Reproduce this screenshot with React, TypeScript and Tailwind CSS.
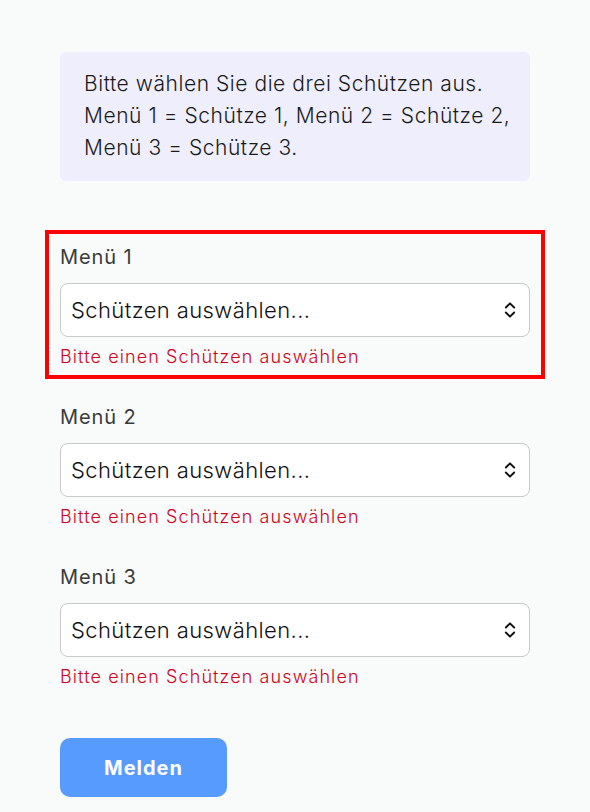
import { ChevronsUpDown } from 'lucide-react';

const shooters = ['Menü 1', 'Menü 2', 'Menü 3'];

const intro = [
  'Bitte wählen Sie die drei Schützen aus.',
  'Menü 1 = Schütze 1, Menü 2 = Schütze 2,',
  'Menü 3 = Schütze 3.',
];

function ShooterSelect({ label, highlighted }: { label: string; highlighted?: boolean }) {
  return (
    <div
      className={`flex flex-col ${
        highlighted ? 'outline-4 outline-solid outline-[#ff0000] outline-offset-[11px]' : ''
      }`}
    >
      <label className="text-[20px] leading-6 tracking-[0.9px] text-[#3a3a3a]">{label}</label>
      <div className="mt-3.5 flex h-[54px] items-center justify-between rounded-lg border border-[#c9c9c9] bg-white pl-[10px] pr-[9px]">
        <span className="text-[22px] font-light tracking-[0.4px] text-[#111]">Schützen auswählen...</span>
        <ChevronsUpDown className="h-5 w-5 text-[#111]" strokeWidth={2.25} />
      </div>
      <p className="mt-[12px] text-[18px] leading-[15px] font-light tracking-[1.1px] text-[#d0021b]">
        Bitte einen Schützen auswählen
      </p>
    </div>
  );
}

export default function App() {
  return (
    <div className="min-h-screen bg-[#f9fafa] px-[60px] pt-[52px] font-['Inter','Open_Sans',sans-serif]">
      <div className="rounded-md bg-[#eeeefd] px-6 pt-4 pb-[17px] text-[21px] leading-8 font-light tracking-[0.55px] text-[#1a1a1a]">
        {intro.map((line) => (
          <div key={line} className="whitespace-nowrap">
            {line}
          </div>
        ))}
      </div>

      <div className="mt-16 flex flex-col gap-[41px]">
        {shooters.map((s, i) => (
          <ShooterSelect key={s} label={s} highlighted={i === 0} />
        ))}
      </div>

      <button className="mt-[54px] h-[59px] w-[167px] rounded-[10px] bg-[#579bff] text-[20px] font-bold tracking-[1px] text-white">
        Melden
      </button>
    </div>
  );
}
